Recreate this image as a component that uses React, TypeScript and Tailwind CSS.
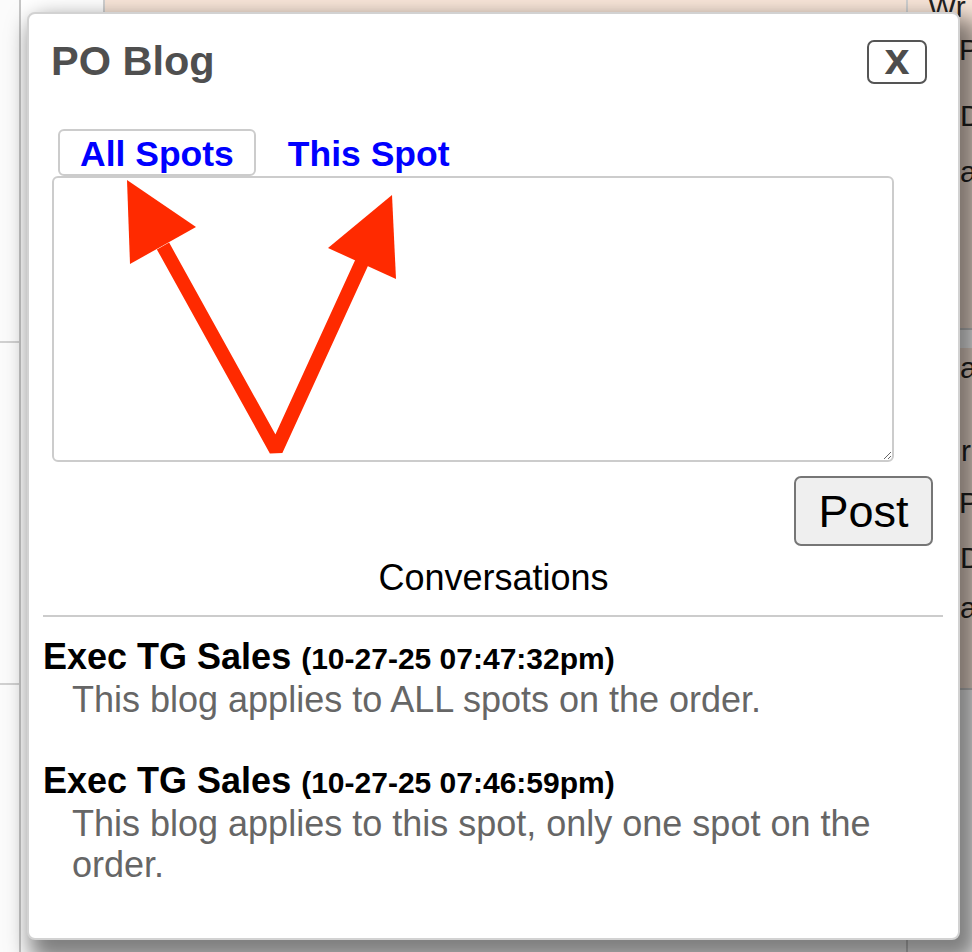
import React from "react";

function BgRightColumn() {
  return (
    <div className="w-[66px] shrink-0 border-l-2 border-[#d0d0d0] text-[30px] text-[#222] overflow-hidden whitespace-nowrap">
      <div className="h-[343px] border-b-2 border-[#cfcfcf] bg-[#f9e6d9] pl-[20px]">
        <div className="-mt-[13px] leading-[40px]">Wr</div>
        <div className="mt-[3px] leading-[40px] pl-[31px]">P</div>
        <div className="mt-[26px] leading-[40px] pl-[32px]">D</div>
        <div className="mt-[16px] leading-[40px] pl-[32px]">a</div>
      </div>
      <div className="h-[342px] border-b-2 border-[#cfcfcf] bg-[#f9e6d9] pl-[20px]">
        <div className="mt-[18px] leading-[40px] pl-[32px]">a</div>
        <div className="mt-[43px] leading-[40px] pl-[33px]">r</div>
        <div className="mt-[12px] leading-[40px] pl-[31px]">P</div>
        <div className="mt-[15px] leading-[40px] pl-[32px]">D</div>
        <div className="mt-[10px] leading-[40px] pl-[32px]">a</div>
      </div>
      <div className="bg-white h-full" />
    </div>
  );
}

function Entry({
  name,
  date,
  body,
  first,
}: {
  name: string;
  date: string;
  body: string;
  first?: boolean;
}) {
  return (
    <div className={first ? "mt-[20px]" : "mt-[41px]"}>
      <div className="text-[36px] font-bold leading-[40px] text-black whitespace-nowrap">
        {name} <span className="text-[30px]">{date}</span>
      </div>
      <div className="pl-[29px] pr-[12px] text-[36px] leading-[41px] text-[#666666]">
        {body}
      </div>
    </div>
  );
}

export default function App() {
  return (
    <div className="relative h-[952px] w-[972px] overflow-hidden bg-white font-['Liberation_Sans',Arial,sans-serif]">
      {/* background page */}
      <div className="flex h-full">
        <div className="w-[21px] shrink-0 border-r-2 border-[#c6c6c6] bg-[#fbfbfb]">
          <div className="h-[343px] border-b-2 border-[#d0d0d0]" />
          <div className="h-[342px] border-b-2 border-[#d0d0d0]" />
        </div>
        <div className="flex-1">
          <div className="flex h-[12px]">
            <div className="w-[84px] border-r-2 border-[#d0d0d0] bg-white" />
            <div className="flex-1 bg-[#f9e6d9]" />
          </div>
        </div>
        <BgRightColumn />
      </div>

      {/* modal */}
      <div className="absolute left-[27px] top-[12px] h-[928px] w-[933px] rounded-[8px] border-2 border-[#d2d2d2] bg-white shadow-[10px_14px_22px_8px_rgba(0,0,0,0.5)]">
        <div className="flex items-start justify-between pl-[22px] pr-[31px]">
          <div className="mt-[27px] text-[41.5px] font-bold leading-[40px] text-[#4f4f4f]">
            PO Blog
          </div>
          <button className="mt-[26px] flex h-[44px] w-[60px] items-center justify-center rounded-[7px] border-2 border-[#555555] bg-white pb-[8px] text-[45px] font-bold leading-none text-[#4d4d4d]">
            x
          </button>
        </div>

        <div className="pl-[23px]">
          <div className="ml-[6px] mt-[45px] flex gap-[10px]">
            <div className="h-[47px] rounded-[6px] border-2 border-[#cccccc] px-[20px] pt-[3px] text-[35.5px] font-bold leading-[40px] text-[#0000ff]">
              All Spots
            </div>
            <div className="h-[47px] rounded-[6px] border-2 border-transparent px-[20px] pt-[3px] text-[35.5px] font-bold leading-[40px] text-[#0000ff]">
              This Spot
            </div>
          </div>
          <textarea className="block h-[286px] w-[842px] rounded-[6px] border-2 border-[#cccccc] bg-white outline-none" />
        </div>

        <div className="mt-[14px] flex justify-end pr-[25px]">
          <button className="flex h-[70px] w-[139px] items-center justify-center rounded-[7px] border-2 border-[#767676] bg-[#efefef] text-[45px] leading-none text-black">
            Post
          </button>
        </div>

        <div className="mt-[12px] text-center text-[36px] leading-[40px] text-black">
          Conversations
        </div>
        <div className="ml-[14px] mr-[15px] mt-[17px] h-[2px] bg-[#cccccc]" />

        <div className="pl-[14px]">
          <Entry
            first
            name="Exec TG Sales"
            date="(10-27-25 07:47:32pm)"
            body="This blog applies to ALL spots on the order."
          />
          <Entry
            name="Exec TG Sales"
            date="(10-27-25 07:46:59pm)"
            body="This blog applies to this spot, only one spot on the order."
          />
        </div>
      </div>

      {/* red annotation arrows */}
      <svg
        className="pointer-events-none absolute left-0 top-0"
        width="972"
        height="952"
        viewBox="0 0 972 952"
      >
        <polyline
          points="163,246 276,450 362,262"
          fill="none"
          stroke="#ff2a00"
          strokeWidth="14"
          strokeLinejoin="bevel"
        />
        <polygon points="127,180 130,264 196,227" fill="#ff2a00" />
        <polygon points="392,195 328,248 396,279" fill="#ff2a00" />
      </svg>
    </div>
  );
}
